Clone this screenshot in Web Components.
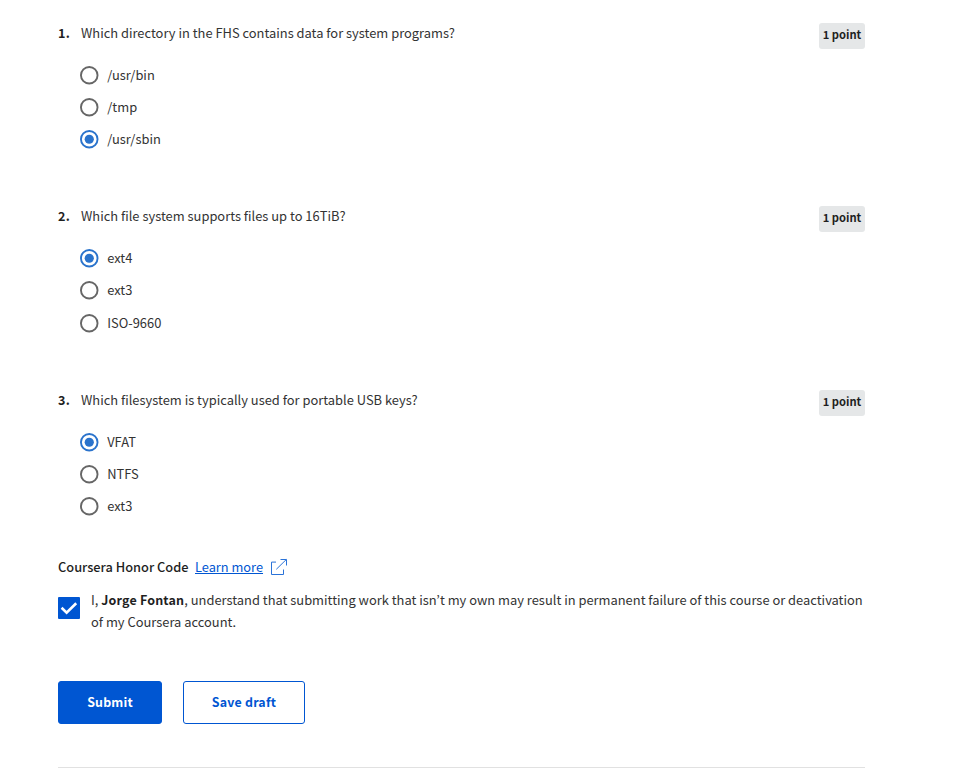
<!DOCTYPE html>
<html lang="en">
<head>
<meta charset="utf-8">
<title>Quiz</title>
<style>
html,body{margin:0;background:#fff}
body{font-family:"Noto Sans CJK KR","Noto Sans",sans-serif;font-size:12.9px;line-height:21px;color:#333;height:768px;overflow:hidden}
strong{color:#1f1f1f;font-size:12.5px;letter-spacing:.18px}
</style>
</head>
<body>
<quiz-page>
  <quiz-question number="1." points="1 point" text="Which directory in the FHS contains data for system programs?">
    <quiz-option>/usr/bin</quiz-option><quiz-option>/tmp</quiz-option><quiz-option checked>/usr/sbin</quiz-option>
  </quiz-question>
  <quiz-question number="2." points="1 point" text="Which file system supports files up to 16TiB?">
    <quiz-option checked>ext4</quiz-option><quiz-option>ext3</quiz-option><quiz-option>ISO-9660</quiz-option>
  </quiz-question>
  <quiz-question number="3." points="1 point" text="Which filesystem is typically used for portable USB keys?">
    <quiz-option checked>VFAT</quiz-option><quiz-option>NTFS</quiz-option><quiz-option>ext3</quiz-option>
  </quiz-question>
  <honor-code slot="footer">I, <strong>Jorge Fontan</strong>, understand that submitting work that isn’t my own may result in permanent failure of this course or deactivation<br>of my Coursera account.</honor-code>
  <quiz-button slot="actions" primary>Submit</quiz-button>
  <quiz-button slot="actions">Save draft</quiz-button>
</quiz-page>
<script>
function define(name, markup) {
  customElements.define(name, class extends HTMLElement {
    constructor() {
      super();
      this.attachShadow({mode: 'open'}).innerHTML = markup;
    }
    connectedCallback() {
      this.shadowRoot.querySelectorAll('[data-attr]').forEach(el => {
        el.textContent = this.getAttribute(el.dataset.attr) || '';
      });
    }
  });
}

define('quiz-page', `
<style>
:host{display:block;box-sizing:border-box;width:865px;padding:23px 0 0 58px}
.questions{display:flex;flex-direction:column;gap:50.9px}
.footer{padding-top:34.4px}
.actions{display:flex;gap:21px;padding:48px 0 43px;border-bottom:1px solid #e1e1e1}
</style>
<div class="questions"><slot></slot></div>
<div class="footer"><slot name="footer"></slot></div>
<div class="actions"><slot name="actions"></slot></div>`);

define('quiz-question', `
<style>
:host{display:block}
header{display:flex;align-items:flex-start;height:36px}
.num{width:23px;font-weight:700;font-size:12.6px;letter-spacing:.3px;color:#1f1f1f;line-height:19px}
.text{flex:1;line-height:19px}
.points{box-sizing:border-box;width:46px;height:26px;line-height:23px;border-radius:3px;background:#e5e7e8;color:#1f1f1f;font-weight:700;font-size:11.2px;text-align:center;white-space:nowrap}
.options{padding-left:22px}
</style>
<header><span class="num" data-attr="number"></span><span class="text" data-attr="text"></span><span class="points" data-attr="points"></span></header>
<div class="options"><slot></slot></div>`);

define('quiz-option', `
<style>
:host{display:flex;align-items:center;height:32.2px;gap:8.7px}
span{padding-bottom:1.6px}
svg{width:18.5px;height:18.5px;flex:none;overflow:visible}
.ring{fill:#fff;stroke:#666;stroke-width:1.9}
.dot{display:none;fill:#2a73cc}
:host([checked]) .ring{stroke:#2a73cc}
:host([checked]) .dot{display:block}
</style>
<svg viewBox="0 0 18.5 18.5"><circle class="ring" cx="9.25" cy="9.25" r="8.3"/><circle class="dot" cx="9.25" cy="9.25" r="4.6"/></svg><span><slot></slot></span>`);

define('honor-code', `
<style>
:host{display:block}
.title{display:flex;align-items:center;height:20px;white-space:nowrap;font-size:12.8px}
b{font-weight:500;color:#1f1f1f}
a{margin-left:6.5px;color:#0056d2;text-decoration:underline}
.ext{width:16px;height:16px;margin-left:8px;fill:none;stroke:#2a73d8;overflow:visible}
.agree{display:flex;align-items:flex-start;gap:11px;padding-top:13px;line-height:21.6px}
.box{flex:none;width:22px;height:22px;margin-top:7px}
.copy{white-space:nowrap;margin-top:-.4px}
</style>
<div class="title"><b>Coursera Honor Code</b><a>Learn more</a>
<svg class="ext" viewBox="0 0 16 16"><path d="M5 3.1H.5v12.4h12V10.5M5.3 10.3l10-9.8M9.5.5h6v6"/></svg></div>
<div class="agree"><svg class="box" viewBox="0 0 22 22"><rect width="22" height="22" rx="1" fill="#0056d2"/><path d="M3.6 10.8l5 4.8L18.2 6.2" fill="none" stroke="#fff" stroke-width="2.6"/></svg>
<div class="copy"><slot></slot></div></div>`);

define('quiz-button', `
<style>
:host{display:block}
button{box-sizing:border-box;width:122px;height:43px;padding:0;border:1px solid #0056d2;border-radius:3px;background:#fff;color:#0056d2;font:700 12.4px/41px "Noto Sans CJK KR","Noto Sans",sans-serif;letter-spacing:.2px}
:host([primary]) button{width:104px;background:#0056d2;color:#fff}
</style>
<button><slot></slot></button>`);
</script>
</body>
</html>
